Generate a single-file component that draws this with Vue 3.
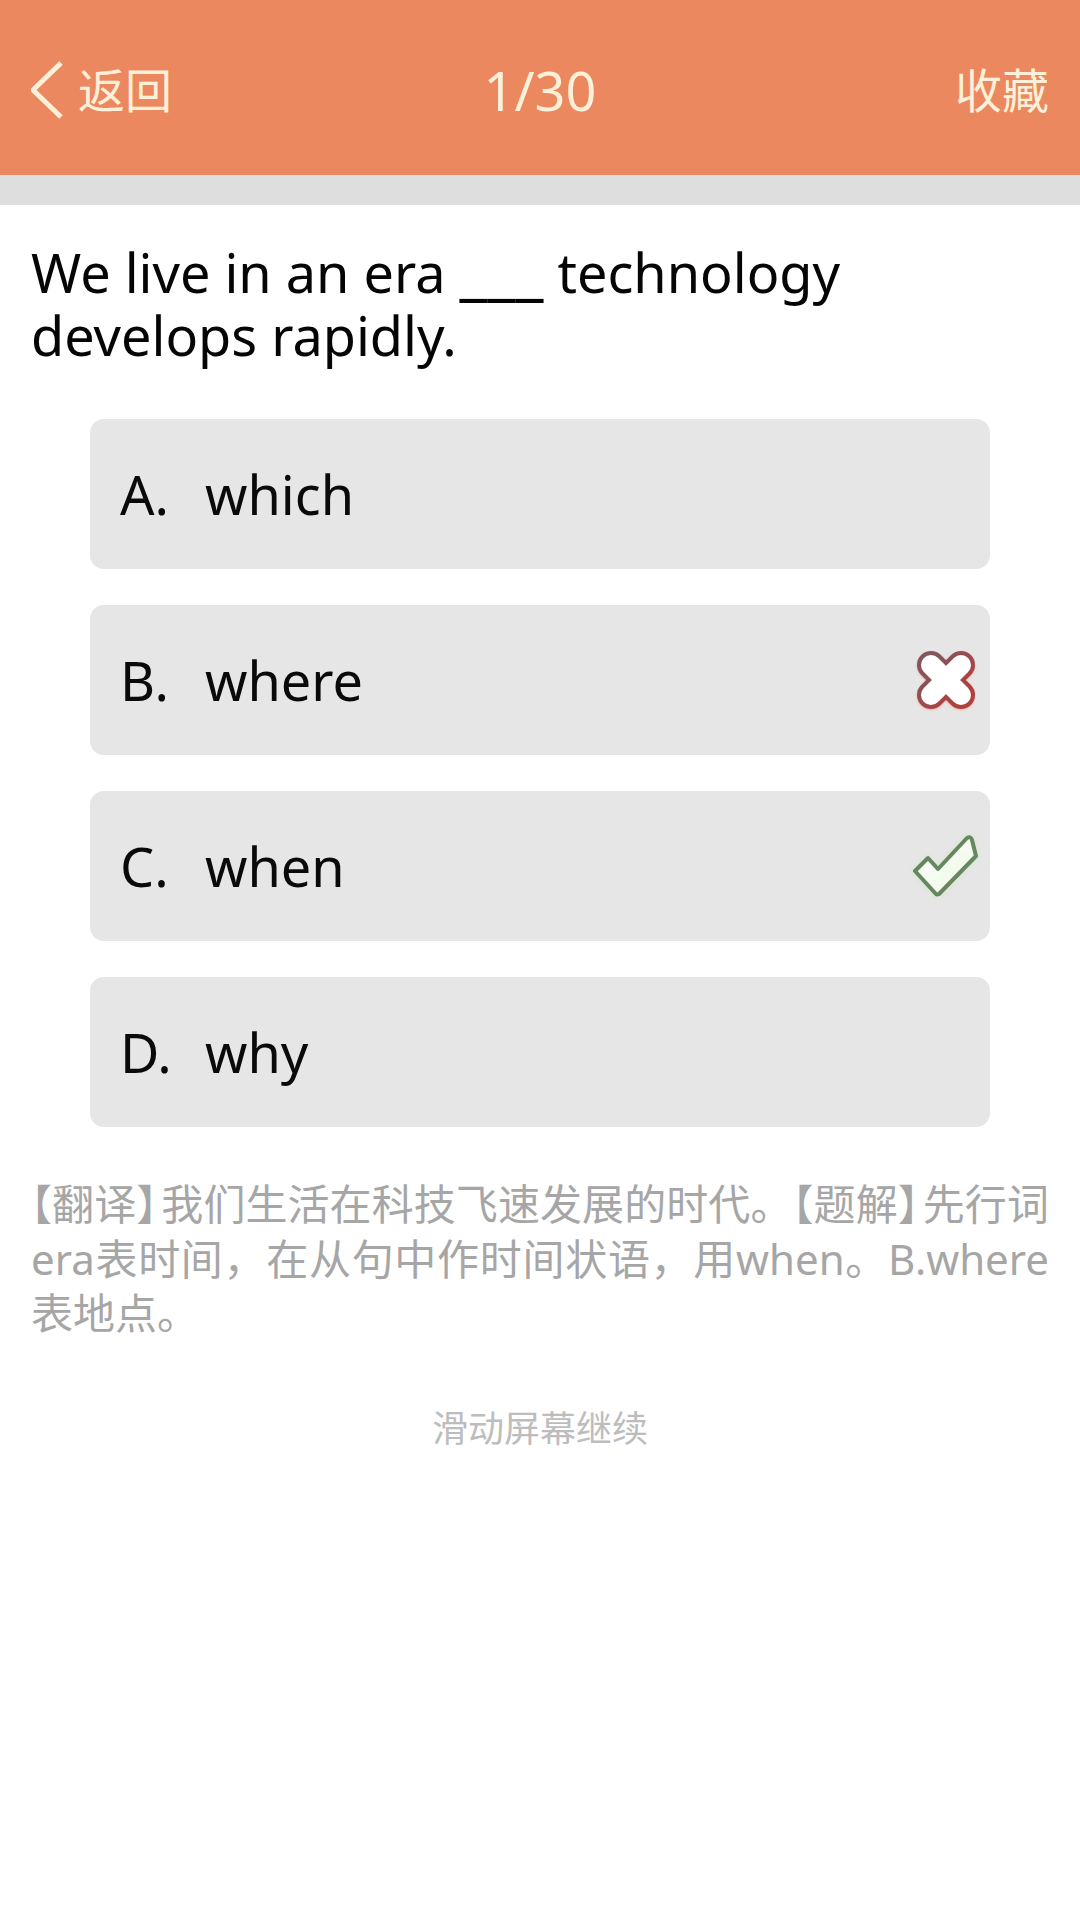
<template>
  <div class="page">
    <!-- Header -->
    <header class="top-bar">
      <div class="back">
        <svg class="back-icon" width="32" height="60" viewBox="0 0 32 60">
          <path d="M30 3 L2 30 L30 57" fill="none" stroke="#fdf0d8" stroke-width="5" />
        </svg>
        <span class="bar-label">返回</span>
      </div>
      <div class="progress">1/30</div>
      <div class="collect"><span class="bar-label">收藏</span></div>
    </header>
    <div class="divider"></div>

    <!-- Question -->
    <p class="question">We live in an era <span class="blank">___</span> technology<br>develops rapidly.</p>

    <!-- Options -->
    <div class="options">
      <div v-for="opt in options" :key="opt.key" class="option">
        <span class="opt-key">{{ opt.key }}.</span>
        <span class="opt-text">{{ opt.text }}</span>
        <svg v-if="opt.mark === 'wrong'" class="mark mark-wrong" width="60" height="60" viewBox="0 0 60 60">
          <defs>
            <linearGradient id="wrong-edge" x1="0" y1="0" x2="1" y2="1">
              <stop offset="0" stop-color="#84565c" />
              <stop offset="1" stop-color="#b0403f" />
            </linearGradient>
          </defs>
          <path d="M15 15 L45 45 M45 15 L15 45" fill="none" stroke="url(#wrong-edge)" stroke-width="28" stroke-linecap="round" />
          <path d="M15 15 L45 45 M45 15 L15 45" fill="none" stroke="#fff" stroke-width="20" stroke-linecap="round" />
        </svg>
        <svg v-if="opt.mark === 'right'" class="mark mark-right" width="68" height="64" viewBox="0 0 68 64">
          <defs>
            <linearGradient id="right-fill" x1="0" y1="0" x2="1" y2="1">
              <stop offset="0" stop-color="#fff" />
              <stop offset="1" stop-color="#eaf8e2" />
            </linearGradient>
          </defs>
          <path
            d="M4 37 L17 24 L27 35 L56 4 Q60 2 61 6 L65 22 L28 60 Q26 61 25 60 Z"
            fill="url(#right-fill)" stroke="#66875f" stroke-width="4" stroke-linejoin="round"
          />
        </svg>
      </div>
    </div>

    <!-- Explanation -->
    <p class="explain"><span class="tag">【翻译】</span>我们生活在科技飞速发展的时代。<span class="tag">【题解】</span>先行词era表时间，在从句中作时间状语，用when。B.where表地点。</p>
    <div class="hint">滑动屏幕继续</div>
  </div>
</template>

<script setup>
const options = [
  { key: 'A', text: 'which' },
  { key: 'B', text: 'where', mark: 'wrong' },
  { key: 'C', text: 'when', mark: 'right' },
  { key: 'D', text: 'why' }
]
</script>

<style>
html, body {
  background: #fff;
}
</style>

<style scoped>
.page {
  width: 1080px;
  height: 1920px;
  background: #fff;
  font-family: "Noto Sans", "Noto Sans CJK SC", sans-serif;
  overflow: hidden;
}

.top-bar {
  height: 175px;
  background: #ec885f;
  color: #fdf0d8;
  font-size: 47px;
  display: grid;
  grid-template-columns: 1fr auto 1fr;
  align-items: center;
  padding: 5px 31px 0;
  box-sizing: border-box;
}

.back {
  display: flex;
  align-items: center;
  gap: 15px;
}

.back-icon {
  display: block;
}

.bar-label {
  display: inline-block;
  margin-top: -6px;
}

.progress {
  font-size: 54px;
}

.collect {
  display: flex;
  justify-content: flex-end;
}

.divider {
  height: 30px;
  background: #dedede;
}

.question {
  margin: 0;
  padding: 36px 31px 0;
  font-size: 54px;
  line-height: 63px;
  color: #050505;
}

.blank {
  font-size: 63px;
  line-height: 0;
}

.options {
  display: flex;
  flex-direction: column;
  gap: 36px;
  margin: 52px 90px 0;
}

.option {
  height: 150px;
  background: #e6e6e6;
  border-radius: 14px;
  display: flex;
  align-items: center;
  padding: 0 14px 0 30px;
  font-size: 54px;
  color: #0a0a0a;
}

.opt-key {
  width: 85px;
}

.mark {
  margin-left: auto;
}

.mark-wrong {
  filter: drop-shadow(0 1px 1px #f2b3ae);
}

.mark-right {
  margin-right: -3px;
  filter: drop-shadow(0 0 2px #cdeabf);
}

.explain {
  margin: 50px 0 0;
  padding: 0 31px;
  font-size: 42px;
  line-height: 54.5px;
  color: #a6a6a6;
  text-align: justify;
}

.tag {
  font-feature-settings: "halt";
  margin-right: 4px;
}

.hint {
  margin-top: 59px;
  text-align: center;
  font-size: 36px;
  color: #bdbdbd;
}
</style>
